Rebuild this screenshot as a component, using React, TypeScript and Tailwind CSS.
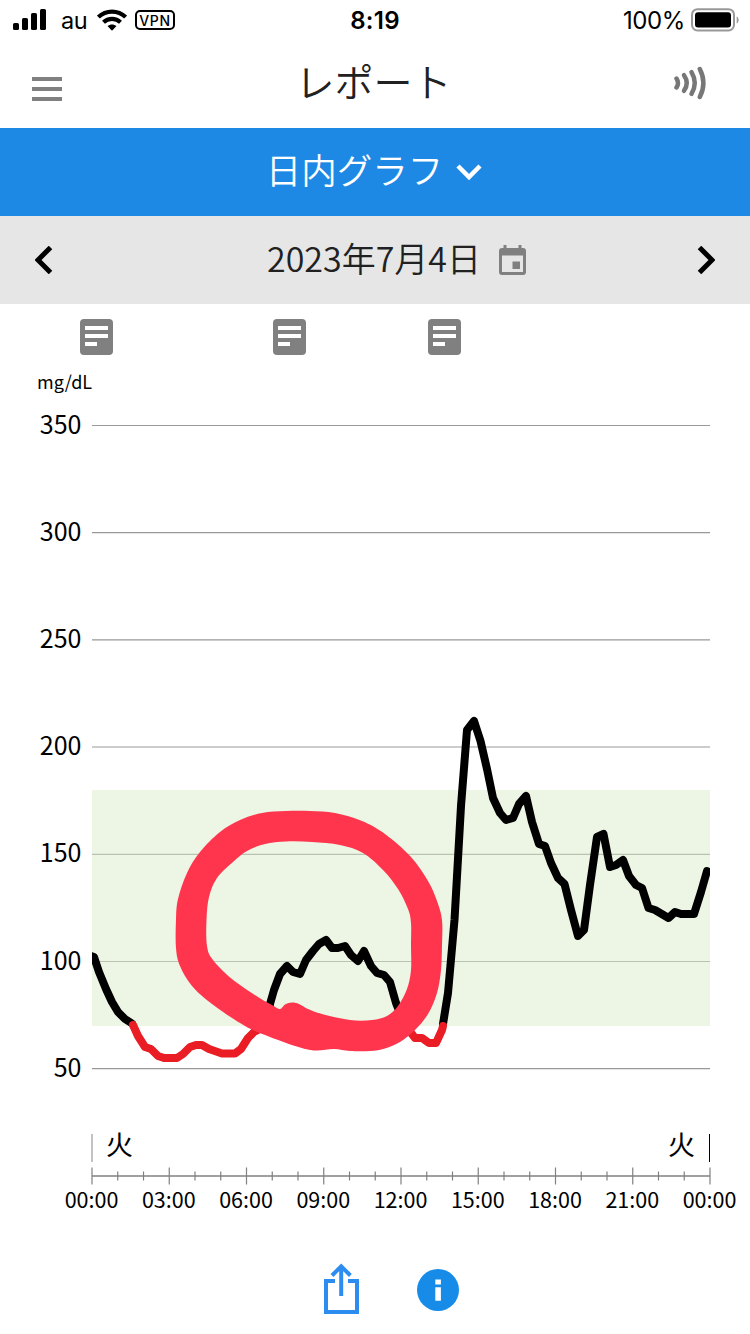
import React from "react";

type Point = [number, number];

const CHART_LEFT = 92;
const CHART_RIGHT = 710;
const HOUR = (CHART_RIGHT - CHART_LEFT) / 24;
const INK = "#000000";
const LOW = "#ea1c24";
const GREY = "#808080";

const levels = [
  { value: 350, y: 425.5 },
  { value: 300, y: 532.7 },
  { value: 250, y: 639.8 },
  { value: 200, y: 747 },
  { value: 150, y: 854.3 },
  { value: 100, y: 961.5 },
  { value: 50, y: 1068.7 },
];

const hours = ["00:00", "03:00", "06:00", "09:00", "12:00", "15:00", "18:00", "21:00", "00:00"];

const series: { color: string; points: string }[] = [
  { color: INK, points: "91,956 94,957 99,972 106,989 112,1002 118,1012 125,1019 132,1023.5" },
  { color: INK, points: "268,1024 270,1004 274,990 280,974 287,966 293,972 300,974 306,960 313,951 319,944 326,940 332,948 338,948 345,946 351,955 358,961 364,951 371,966 377,973 384,975 390,982 396,1003 400,1013 405,1025" },
  { color: INK, points: "443,1024 448,993 454.5,920 461,806 467,730 474,721 480.5,741 487,769 493,798 500,813 506,820 513,818 519,804 526,796 532,822 539,844 545,846 551,863 558,878 564.5,884 571,910 578,936 584,930 590,885 597,837 603.5,834 610,867 616,865 623,860 629,876 636,885 642,888 648.5,908 655,910 668.5,918 675,912 681,914 694,914 701,892 707,871" },
  { color: LOW, points: "133,1025 138,1036 145,1047 151,1049 158,1056 164,1058 177,1058 183,1054 190,1047 196,1045 202,1045 209,1049 222,1053.5 235,1053.5 241,1049 248,1038 254,1032 262,1028 268,1025" },
  { color: LOW, points: "405,1025 415,1038 422,1038 429,1043 436,1043 442,1030 443,1026" },
];

const ringOuter: Point[] = [
  [286, 811], [262, 813], [240, 820], [220, 832], [200, 852], [187, 873], [178, 899], [176, 920],
  [176, 948], [180, 966], [192, 986], [212, 1004], [245, 1026], [270, 1037], [300, 1047.5], [316, 1050.5],
  [334, 1049], [350, 1051], [370, 1051], [385, 1048.5], [400, 1042], [415, 1030], [428, 1014], [437, 993],
  [441, 970], [442, 945], [442, 920], [437, 901], [428, 881], [411, 857], [385, 834], [362, 821],
  [335, 813], [310, 811],
];

const ringInner: Point[] = [
  [286, 841.5], [265, 844], [247, 851], [233, 862], [217, 878], [209, 897], [206.5, 920], [207, 946],
  [213, 960], [232, 979], [258, 997], [272, 1005], [280, 1009], [285, 1004.5], [292, 1002.5], [299, 1004], [308, 1009], [322, 1014],
  [350, 1020], [372, 1020], [387, 1016], [398, 1006], [407, 989], [411, 970], [411, 945], [411, 923],
  [408, 909], [398, 889], [383, 870], [363, 853], [340, 845], [312, 842],
];

function smoothLoop(points: Point[]): string {
  const n = points.length;
  let d = `M${points[0][0]} ${points[0][1]}`;
  for (let i = 0; i < n; i++) {
    const a = points[(i + n - 1) % n];
    const b = points[i];
    const c = points[(i + 1) % n];
    const e = points[(i + 2) % n];
    d += `C${b[0] + (c[0] - a[0]) / 6} ${b[1] + (c[1] - a[1]) / 6} ${c[0] - (e[0] - b[0]) / 6} ${c[1] - (e[1] - b[1]) / 6} ${c[0]} ${c[1]}`;
  }
  return d + "Z";
}

function StatusBar() {
  return (
    <div className="grid h-10 grid-cols-3 items-center font-[Inter,sans-serif] text-black">
      <div className="flex items-center pl-[13px]">
        <svg width="33" height="22" viewBox="0 0 33 22">
          <rect x="0" y="14" width="6" height="7" rx="1.6" />
          <rect x="9" y="9" width="6" height="12" rx="1.6" />
          <rect x="18" y="4" width="6" height="17" rx="1.6" />
          <rect x="27" y="0" width="6" height="21" rx="1.6" />
        </svg>
        <span className="ml-[15px] w-9 pt-[2px] text-[23.5px] leading-8 tracking-[-0.5px]">au</span>
        <svg width="30" height="22" viewBox="0 0 30 22">
          <g fill="none" stroke="#000" strokeWidth="4.2">
            <path d="M1.4 8.1C9 .8 21 .8 28.600 8.100" />
            <path d="M6.500 13.200C11.300 8.700 18.700 8.700 23.500 13.200" />
          </g>
          <path d="M10.500 17.100C13 14.900 17 14.900 19.500 17.100L15 21.700Z" />
        </svg>
        <span className="ml-2 flex h-5 w-10 items-center justify-center rounded-[5px] border-2 border-black text-[14px] font-medium tracking-[0.6px]">VPN</span>
      </div>
      <div className="pt-[2px] text-center text-[24px] font-semibold leading-8 tracking-[0.3px]">8:19</div>
      <div className="flex items-center justify-end pr-[11px]">
        <span className="whitespace-nowrap pt-[2px] text-[24px] leading-8 tracking-[-0.4px]">100%</span>
        <svg className="ml-[6px]" width="48" height="24" viewBox="0 0 48 24">
          <rect x="1" y="1.200" width="42" height="21.300" rx="5.500" fill="none" stroke="#999" strokeWidth="2" />
          <rect x="4" y="4.200" width="36" height="15.300" rx="3" />
          <path d="M45.700 8.500c2.600 1.300 2.600 5.700 0 7z" fill="#999" />
        </svg>
      </div>
    </div>
  );
}

function Header() {
  return (
    <header className="flex h-[88px] items-center justify-between pl-8 pr-[42px]">
      <svg className="mt-[10px]" width="30" height="24" viewBox="0 0 30 24" fill={GREY}>
        <rect width="30" height="4" />
        <rect y="10" width="30" height="4" />
        <rect y="20" width="30" height="4" />
      </svg>
      <h1 className="mb-2 ml-[11px] text-[39px] font-[350] leading-[56px] text-[#212121]">レポート</h1>
      <svg className="-mt-[2px]" width="34" height="34" viewBox="0 0 34 34" fill="none" stroke="#777" strokeWidth="4.5" strokeLinecap="round">
        <path d="M2.500 12.500Q5.500 17 2.500 21.500" />
        <path d="M10 9.200Q15.500 17 10 24.800" />
        <path d="M17.500 6.200Q24 17 17.500 27.800" />
        <path d="M25.800 3Q33 17 25.800 31" />
      </svg>
    </header>
  );
}

function NoteMarker({ x }: { x: number }) {
  return (
    <g transform={`translate(${x} 319)`}>
      <rect width="33" height="36" rx="4" fill={GREY} />
      <path d="M5 7h23v4H5zM5 15h23v4H5zM5 23h12v4H5z" fill="#fff" />
    </g>
  );
}

function GlucoseChart() {
  return (
    <svg className="block" width="750" height="930" viewBox="0 304 750 930">
      <defs>
        <clipPath id="plot">
          <rect x={CHART_LEFT} y="400" width={CHART_RIGHT - CHART_LEFT} height="700" />
        </clipPath>
      </defs>
      {[80, 273, 428].map((x) => (
        <NoteMarker key={x} x={x} />
      ))}
      <text x="37" y="389" fontSize="18">mg/dL</text>
      {levels.map(({ value, y }) => (
        <g key={value}>
          <line x1={CHART_LEFT} x2={CHART_RIGHT} y1={y} y2={y} stroke="#999" strokeWidth="1.200" />
          <text x="81.500" y={y + 8} textAnchor="end" fontSize="25">{value}</text>
        </g>
      ))}
      <rect x={CHART_LEFT} y="790" width="618" height="236" fill="#dbebcb" fillOpacity="0.5" />
      <g clipPath="url(#plot)" fill="none" strokeWidth="8" strokeLinecap="round" strokeLinejoin="round">
        {series.map(({ color, points }) => (
          <polyline key={points} points={points} stroke={color} />
        ))}
      </g>
      <path d={smoothLoop(ringOuter) + smoothLoop(ringInner)} fill="#ff354d" fillRule="evenodd" />
      <line x1="92" x2="92" y1="1134" y2="1162" stroke="#999" strokeWidth="1.200" />
      <line x1="709.500" x2="709.500" y1="1134" y2="1162" stroke="#000" />
      <text x="106" y="1155" fontSize="27">火</text>
      <text x="668" y="1155" fontSize="27">火</text>
      <line x1={CHART_LEFT} x2={CHART_RIGHT} y1="1176" y2="1176" stroke={GREY} strokeWidth="1.400" />
      {Array.from({ length: 25 }, (_, h) => {
        const half = h % 3 === 0 ? 8.5 : 4.5;
        const x = CHART_LEFT + h * HOUR;
        return <line key={h} x1={x} x2={x} y1={1176 - half} y2={1176 + half} stroke={GREY} strokeWidth="1.200" />;
      })}
      {hours.map((label, i) => (
        <text key={i} x={91.5 + i * 3 * HOUR} y="1208" textAnchor="middle" fontSize="21.500">{label}</text>
      ))}
    </svg>
  );
}

export default function App() {
  return (
    <main lang="ja" className="flex h-[1334px] w-[750px] flex-col overflow-hidden bg-white font-['Noto_Sans_CJK_JP',sans-serif] text-black">
      <StatusBar />
      <Header />
      <div className="flex h-[88px] items-center justify-center gap-[13px] bg-[#1e88e5] pr-[2px] text-white">
        <span className="pb-[6px] text-[35.5px] font-[350] leading-[52px]">日内グラフ</span>
        <svg width="26" height="18" viewBox="0 0 26 18" fill="none" stroke="#fff" strokeWidth="4.5">
          <path d="M2 3L13 14L24 3" />
        </svg>
      </div>
      <div className="flex h-[88px] items-center justify-between bg-[#e6e6e6] px-[35px]">
        <svg width="18" height="28" viewBox="0 0 18 28" fill="none" stroke="#000" strokeWidth="5">
          <path d="M15.500 1.500L3 14L15.500 26.500" />
        </svg>
        <div className="ml-[43px] flex items-center gap-[18px]">
          <span className="pb-1 text-[34px] font-[350] leading-[50px] text-[#212121]">2023年7月4日</span>
          <svg width="27" height="30" viewBox="0 0 27 30" fill={GREY}>
            <path fillRule="evenodd" d="M4.500 0h3v3h12V0h3v3H24a3 3 0 0 1 3 3v21a3 3 0 0 1-3 3H3a3 3 0 0 1-3-3V6a3 3 0 0 1 3-3h1.500zM3 10.500V27h21V10.500z" />
            <rect x="13.500" y="16.500" width="7.500" height="7.500" />
          </svg>
        </div>
        <svg width="18" height="28" viewBox="0 0 18 28" fill="none" stroke="#000" strokeWidth="5">
          <path d="M2.500 1.500L15 14L2.500 26.500" />
        </svg>
      </div>
      <GlucoseChart />
      <footer className="flex h-[100px] items-start gap-[58px] pl-[324px] pt-[29px]">
        <svg width="35" height="51" viewBox="0 0 35 51" fill="none" stroke="#2d8cf0" strokeWidth="4">
          <path d="M11 18H2V49H33V18H24" />
          <path d="M17.200 33V4M8 12.500L17.200 3.300L26.400 12.500" />
        </svg>
        <svg className="mt-[6px]" width="42" height="42" viewBox="0 0 42 42">
          <circle cx="21" cy="21" r="21" fill="#168ce8" />
          <path d="M18.300 10.500h5.600v5h-5.600zM18.300 18.300h5.600v13.500h-5.600z" fill="#fff" />
        </svg>
      </footer>
    </main>
  );
}
